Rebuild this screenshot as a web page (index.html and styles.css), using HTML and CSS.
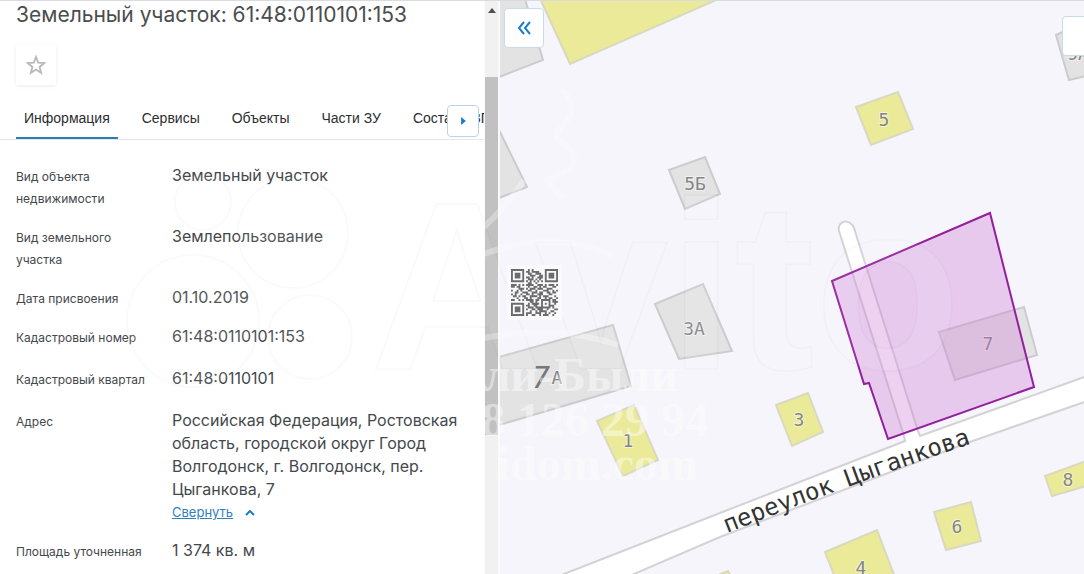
FILE: index.html
```html
<!DOCTYPE html>
<html lang="ru">
<head>
  <meta charset="utf-8">
  <meta name="viewport" content="width=device-width, initial-scale=1.0">
  <title>Земельный участок: 61:48:0110101:153</title>
  <link rel="stylesheet" href="styles.css">
</head>
<body>
  <div class="page">
    <aside class="panel">
      <h1>Земельный участок: 61:48:0110101:153</h1>
      <button class="favorite" type="button" aria-label="В избранное">
        <svg width="22" height="22" viewBox="0 0 24 24"><path d="M12 3.2l2.4 6.3 6.700.35-5.200 4.250 1.750 6.500L12 16.900 6.350 20.600l1.750-6.500-5.200-4.250 6.700-.35z" fill="none" stroke="#b9b9b9" stroke-width="2"/></svg>
      </button>

      <div class="tabs-wrap">
        <nav class="tabs">
          <a class="active" href="#info">Информация</a>
          <a href="#services">Сервисы</a>
          <a href="#objects">Объекты</a>
          <a href="#parts">Части ЗУ</a>
          <a href="#ezp">Состав ЕЗП</a>
        </nav>
        <button class="tabs-next" type="button" aria-label="Далее">
          <svg width="5" height="8" viewBox="0 0 6 10"><path d="M0 0l6 5-6 5z" fill="#1c7cc4"/></svg>
        </button>
      </div>

      <dl class="info" id="info">
        <div class="row"><dt>Вид объекта недвижимости</dt><dd>Земельный участок</dd></div>
        <div class="row"><dt>Вид земельного участка</dt><dd>Землепользование</dd></div>
        <div class="row"><dt>Дата присвоения</dt><dd>01.10.2019</dd></div>
        <div class="row number"><dt>Кадастровый номер</dt><dd>61:48:0110101:153</dd></div>
        <div class="row number"><dt>Кадастровый квартал</dt><dd>61:48:0110101</dd></div>
        <div class="row address">
          <dt>Адрес</dt>
          <dd>Российская Федерация, Ростовская область, городской округ Город Волгодонск, г. Волгодонск, пер. Цыганкова, 7
            <a class="collapse" href="#info"><span>Свернуть</span>
              <svg width="10" height="6" viewBox="0 0 10 6"><path d="M1 5l4-4 4 4" fill="none" stroke="#1c7cc4" stroke-width="2"/></svg>
            </a>
          </dd>
        </div>
        <div class="row"><dt>Площадь уточненная</dt><dd>1 374 кв. м</dd></div>
      </dl>
    </aside>

    <div class="scrollbar">
      <div class="track-top"><svg width="8" height="5" viewBox="0 0 8 5"><path d="M4 0l4 5H0z" fill="#505050"/></svg></div>
      <div class="thumb"></div>
      <div class="track-bottom"></div>
    </div>

    <main class="map">
      <svg class="map-canvas" viewBox="500 1 584 573" preserveAspectRatio="xMinYMin slice">
        <!-- roads -->
        <path class="road" d="M839 231C837 219 851 219 854 228L918 431 920 436 1090 375V400L967 443 720 537 620 580H550L564 574 720 513 905 441 904 436z"/>

        <!-- buildings -->
        <g class="house">
          <path d="M499-1H525L543 60 499 77z"/>
          <path d="M499 130L527 187 499 198z"/>
          <path d="M1056 35L1086 22V76L1069 80z"/>
          <path d="M669 170L705 157 720 194 685 209z"/>
          <path d="M655 304L703 284 732 351 679 359z"/>
          <path d="M499 357L613 325 631 386 499 425z"/>
          <path d="M939 332L1024 307 1037 355 955 380z"/>
        </g>
        <g class="house living">
          <path d="M538-6L570 64 730-6z"/>
          <path d="M856 107L898 92 913 129 871 145z"/>
          <path d="M597 421L634 405 658 460 623 476z"/>
          <path d="M776 405L808 393 823 432 792 446z"/>
          <path d="M1045 476L1086 461V486L1052 496z"/>
          <path d="M934 512L971 502 981 541 946 550z"/>
          <path d="M825 552L877 530 896 580H836z"/>
          <path d="M716 576L728 571 732 578z"/>
        </g>

        <g class="number-label">
          <text x="884" y="126">5</text>
          <text x="695" y="190">5Б</text>
          <text x="694" y="335">3А</text>
          <text x="557" y="384">А</text>
          <text x="628" y="447">1</text>
          <text x="799" y="426">3</text>
          <text x="988" y="350">7</text>
          <text x="1068" y="486">8</text>
          <text x="957" y="533">6</text>
          <text x="861" y="574">4</text>
          <text x="1078" y="60">9А</text>
        </g>
        <text class="big-label" x="541" y="388">7</text>

        <path id="street" fill="none" d="M727 533Q850 484 985 439"/>
        <text class="street-label"><textPath href="#street">переулок Цыганкова</textPath></text>

        <path class="parcel" d="M832 281L990 213 1034 387 888 439 869 383 864 384z"/>
      </svg>
      <button class="map-btn toggle" type="button" aria-label="Свернуть панель">
        <svg width="14" height="14" viewBox="0 0 14 14"><path d="M7 1L2 7l5 6M13 1L8 7l5 6" fill="none" stroke="#1c7cd0" stroke-width="2"/></svg>
      </button>
      <button class="map-btn layers" type="button" aria-label="Слои"></button>
    </main>

    <svg class="watermark" viewBox="0 1 1084 573" preserveAspectRatio="xMinYMin slice">
      <g class="brand">
        <circle cx="203" cy="202" r="28"/>
        <circle cx="293" cy="233" r="55"/>
        <circle cx="193" cy="321" r="66"/>
        <circle cx="310" cy="337" r="42"/>
        <text x="370" y="369">Avito</text>
      </g>
      <g class="swirl">
        <path d="M561 88C590 118 550 126 558 140 592 160 566 174 547 180L563 198"/>
        <path d="M484 227Q508 205 524 180M484 254Q555 228 612 256M484 338Q555 324 618 345"/>
      </g>
      <g class="agency">
        <text x="678" y="391">ли-Были</text>
        <text x="709" y="436">8 126 29 94</text>
        <text x="698" y="480">idom.com</text>
      </g>
      <rect x="507" y="265" width="55" height="55" fill="#fafafd"/>
      <svg x="511" y="269" width="47" height="47" viewBox="0 0 25 25">
        <g fill="none" stroke="#6c6c6f">
          <path d="M.5.5h6v6h-6zM18.500.5h6v6h-6zM.5 18.500h6v6h-6z"/>
          <path stroke-width="3" d="M2 3.500h3M20 3.500h3M2 21.500h3"/>
          <path d="M9 .5h1m1 0h1M8 1.500h2m1 0h4M9 2.500h2m2 0h3M10 3.500h3m2 0h2M8 4.500h2m1 0h1m2 0h3M9 5.500h3m1 0h1m1 0h1M8 6.500h1m1 0h1m1 0h1m1 0h1m1 0h1M9 7.500h2m2 0h1"/>
          <path d="M0 8.500h3m1 0h1m1 0h1m1 0h4m2 0h3m1 0h1m1 0h3m1 0h1M0 9.500h2m1 0h2m4 0h1m2 0h2m1 0h1m1 0h2m3 0h2M4 10.500h3m1 0h1m1 0h3m1 0h3m2 0h3M0 11.500h1m2 0h1m1 0h1m3 0h2m2 0h1m3 0h3m2 0h1m1 0h1M2 12.500h2m2 0h3m2 0h3m1 0h2m2 0h2m1 0h2M0 13.500h1m1 0h1m2 0h1m2 0h2m1 0h1m2 0h3m3 0h2M1 14.500h2m1 0h1m1 0h2m2 0h4m1 0h1m1 0h3m3 0h1M3 15.500h1m3 0h2m1 0h1m3 0h2m2 0h1m1 0h2m2 0h1M0 16.500h2m2 0h1m1 0h1m1 0h4m1 0h2m1 0h5m1 0h2"/>
          <path d="M10 17.500h2m1 0h1m2 0h1m3 0h1m1 0h3M9 18.500h1m1 0h4m1 0h1m1 0h1m1 0h1m2 0h1M8 19.500h2m2 0h2m2 0h1m3 0h3M9 20.500h3m1 0h8m1 0h1M8 21.500h1m2 0h2m1 0h3m2 0h1m3 0h2M10 22.500h1m2 0h1m1 0h4m2 0h2M8 23.500h3m2 0h3m2 0h1m1 0h1m2 0h1M8 24.500h1m2 0h2m2 0h1m1 0h3m2 0h1"/>
        </g>
      </svg>
    </svg>
  </div>
</body>
</html>
```

FILE: styles.css
```css
* {
  box-sizing: border-box;
}
body {
  margin: 0;
  font-family: Inter, sans-serif;
  color: #44494d;
  background: #fff;
}
button {
  padding: 0;
  cursor: pointer;
}
a {
  color: inherit;
  text-decoration: none;
}
.page {
  position: relative;
  display: flex;
  height: 100vh;
  overflow: hidden;
  border-top: 1px solid #dadbe0;
}

/* left panel */
.panel {
  flex: 0 0 484px;
  overflow: hidden;
}
h1 {
  margin: 0 16px;
  font-size: 21px;
  line-height: 28px;
  font-weight: 400;
  color: #4b4d4f;
}
.favorite {
  display: flex;
  align-items: center;
  justify-content: center;
  width: 40px;
  height: 40px;
  margin: 16px 16px 12px;
  border: none;
  background: #fff;
  box-shadow: 0 1px 4px rgba(0, 0, 0, 0.08);
}
.tabs-wrap {
  position: relative;
  border-bottom: 1px solid #e4e8ec;
}
.tabs {
  display: flex;
  gap: 16px;
  padding: 0 16px;
  overflow: hidden;
  white-space: nowrap;
  font-family: "Liberation Sans", Arial, sans-serif;
  font-size: 14px;
  color: #2b2d2f;
}
.tabs a {
  padding: 2px 8px 0;
  line-height: 38px;
  border-bottom: 2px solid transparent;
}
.tabs .active {
  border-color: #2b7fa8;
}
.tabs-next {
  position: absolute;
  top: 8px;
  right: 5px;
  display: flex;
  align-items: center;
  justify-content: center;
  width: 32px;
  height: 32px;
  border: 1px solid #bcd4ea;
  border-radius: 4px;
  background: #fff;
}
.info {
  display: flex;
  flex-direction: column;
  gap: 15px;
  margin: 24px 16px 0;
}
.row {
  display: grid;
  grid-template-columns: 132px 1fr;
  column-gap: 24px;
  line-height: 22px;
}
.number {
  min-height: 27px;
}
dt {
  font-size: 12px;
  padding-top: 2px;
}
dd {
  margin: 0;
  font-size: 16px;
}
.address dd {
  line-height: 23px;
}
.collapse {
  display: flex;
  align-items: center;
  gap: 12px;
  font-size: 13px;
  color: #2f7fc1;
}
.collapse span {
  text-decoration: underline;
}

/* scrollbar */
.scrollbar {
  display: flex;
  flex-direction: column;
  flex: 0 0 16px;
  border-right: 2px solid #fafafa;
  border-left: 1px solid #fafafa;
  background: #f1f1f1;
}
.track-top {
  flex: 70;
  padding-top: 6px;
  text-align: center;
  line-height: 0;
}
.thumb {
  flex: 358;
  background: #c1c1c1;
}
.track-bottom {
  flex: 139;
}

/* map */
.map {
  position: relative;
  flex: 1;
  overflow: hidden;
  background: #f5f5fb;
}
.map-canvas {
  display: block;
  width: 100%;
  height: 100%;
}
.road {
  fill: #fff;
  stroke: #d3d3d5;
  stroke-width: 2;
}
.house {
  fill: #e3e3e4;
  stroke: #cccccf;
  stroke-width: 2;
}
.living {
  fill: #eaea98;
  stroke: #d9d9c0;
}
.number-label {
  font-family: "DejaVu Sans Mono", monospace;
  font-size: 18px;
  fill: #858588;
  stroke: rgba(255, 255, 255, 0.5);
  stroke-width: 2;
  paint-order: stroke;
  text-anchor: middle;
}
.big-label {
  font-family: "DejaVu Sans Mono", monospace;
  font-size: 30px;
  font-style: italic;
  fill: #77777a;
  text-anchor: middle;
}
.street-label {
  font-family: "DejaVu Sans Mono", monospace;
  font-size: 24px;
  fill: #333;
}
.parcel {
  fill: rgba(205, 120, 215, 0.35);
  stroke: #941f9c;
  stroke-width: 2;
}
.map-btn {
  position: absolute;
  display: flex;
  align-items: center;
  justify-content: center;
  width: 40px;
  height: 40px;
  border: 1px solid #c5dcec;
  border-radius: 4px;
  background: #fff;
}
.toggle {
  top: 7px;
  left: 4px;
}
.layers {
  top: 15px;
  right: -18px;
}

/* watermark over the whole page */
.watermark {
  position: absolute;
  inset: 0;
  width: 100%;
  height: 100%;
  pointer-events: none;
}
.brand {
  fill: rgba(255, 255, 255, 0.08);
  stroke: rgba(0, 0, 0, 0.02);
  stroke-width: 2;
}
.brand text {
  font-family: "Liberation Sans", Arial, sans-serif;
  font-size: 240px;
  font-weight: bold;
}
.swirl {
  fill: none;
  stroke: rgba(255, 255, 255, 0.3);
  stroke-width: 6;
}
.agency {
  font-family: "Liberation Serif", serif;
  font-size: 48px;
  font-weight: bold;
  fill: rgba(255, 255, 255, 0.45);
  text-anchor: end;
}
```
